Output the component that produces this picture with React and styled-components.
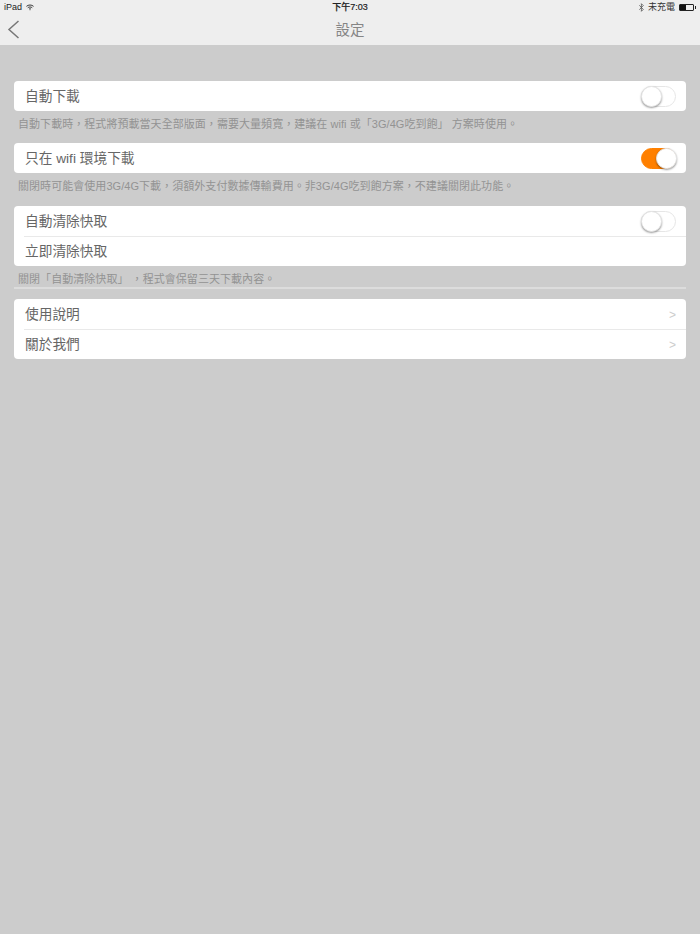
import styled, { createGlobalStyle } from "styled-components";

const GlobalStyle = createGlobalStyle`
  html, body {
    margin: 0;
    padding: 0;
    background: #cccccc;
    font-family: "Liberation Sans", "Noto Sans CJK TC", sans-serif;
  }
`;

const Page = styled.div`
  min-height: 934px;
  background: #cccccc;
`;

const Header = styled.header`
  height: 45px;
  background: #eeeeee;
  display: flex;
  flex-direction: column;
`;

const StatusBar = styled.div`
  height: 14px;
  padding: 0 4px;
  display: grid;
  grid-template-columns: 1fr auto 1fr;
  align-items: center;
  font-size: 9px;
  line-height: 14px;
  color: #222;
`;

const StatusLeft = styled.div`
  display: flex;
  align-items: center;
  gap: 4px;
`;

const StatusTime = styled.div`
  font-weight: 500;
  -webkit-text-stroke: 0.2px #222;
`;

const StatusRight = styled.div`
  display: flex;
  align-items: center;
  justify-content: flex-end;
  gap: 4px;
  color: #333;
`;

const NavBar = styled.div`
  flex: 1;
  position: relative;
  display: flex;
  align-items: center;
  justify-content: center;
`;

const BackButton = styled.div`
  position: absolute;
  left: 7px;
  top: 6px;
  display: flex;
`;

const Title = styled.h1`
  margin: 0 0 2px;
  font-size: 14.5px;
  font-weight: 400;
  color: #858585;
`;

const Content = styled.main`
  padding: 36px 14px 0;
`;

const Card = styled.section`
  background: #fff;
  border-radius: 4px;
  overflow: hidden;
`;

const Row = styled.div`
  height: 30px;
  box-sizing: border-box;
  margin-left: 10px;
  padding: 0 10px 0 1px;
  display: flex;
  align-items: center;
  justify-content: space-between;
  font-size: 13.7px;
  color: #666;
  & + & {
    box-shadow: inset 0 1px 0 ${p => (p.$soft ? "#e9e9e9" : "#dedede")};
  }
`;

const Label = styled.span`
  margin-top: -2px;
`;

const Note = styled.p`
  margin: 0;
  height: ${p => p.$height || 32}px;
  padding: 6px 0 0 4px;
  box-sizing: border-box;
  font-size: 11px;
  line-height: 15px;
  letter-spacing: 0.05px;
  color: #939393;
`;

const ShortNote = styled(Note)`
  height: 23px;
  margin-bottom: 10px;
  border-bottom: 2px solid #dcdcdc;
`;

const Track = styled.div`
  width: 35px;
  height: 21px;
  box-sizing: border-box;
  border-radius: 11px;
  position: relative;
  background: ${p => (p.$on ? "#ff8000" : "#fff")};
  border: 1px solid ${p => (p.$on ? "#ff8000" : "#e6e6e6")};
`;

const Knob = styled.div`
  position: absolute;
  top: -1px;
  left: ${p => (p.$on ? "14px" : "-1px")};
  width: 21px;
  height: 21px;
  box-sizing: border-box;
  border-radius: 50%;
  background: #fff;
  border: 1px solid #e4e4e4;
  box-shadow: 0 1px 2px rgba(0, 0, 0, 0.4);
`;

const Chevron = styled.span`
  font-size: 12px;
  color: #cccccc;
  margin-top: 1px;
`;

const Battery = styled.div`
  width: 15px;
  height: 7px;
  box-sizing: border-box;
  border: 1px solid #222;
  border-radius: 1px;
  margin-right: 2px;
  position: relative;
  &::before {
    content: "";
    position: absolute;
    left: 0;
    top: 0;
    bottom: 0;
    width: 6px;
    background: #111;
  }
  &::after {
    content: "";
    position: absolute;
    right: -3px;
    top: 1px;
    width: 1px;
    height: 3px;
    background: #222;
  }
`;

const Switch = ({ on }) => (
  <Track $on={on}>
    <Knob $on={on} />
  </Track>
);

const Wifi = () => (
  <svg width="8" height="7" viewBox="0 0 9 7" fill="none" stroke="#222" strokeWidth="1">
    <path d="M0.5 2.2C2.7 0.2 6.3 0.2 8.5 2.2" />
    <path d="M2 3.8C3.4 2.6 5.6 2.6 7 3.8" />
    <path d="M3.5 5.2C4.1 4.7 4.9 4.7 5.5 5.2" />
    <circle cx="4.5" cy="6.2" r="0.5" fill="#222" stroke="none" />
  </svg>
);

const Bluetooth = () => (
  <svg width="5" height="9" viewBox="0 0 5 9" fill="none" stroke="#555" strokeWidth="0.8">
    <path d="M0.3 2.3L4.3 6.4L2.4 8.3V0.7L4.3 2.6L0.3 6.7" />
  </svg>
);

const App = () => {
  return (
    <Page>
      <GlobalStyle />
      <Header>
        <StatusBar>
          <StatusLeft>
            iPad <Wifi />
          </StatusLeft>
          <StatusTime>下午7:03</StatusTime>
          <StatusRight>
            <Bluetooth />
            <span>未充電</span>
            <Battery />
          </StatusRight>
        </StatusBar>
        <NavBar>
          <BackButton>
            <svg width="13" height="19" viewBox="0 0 13 19" fill="none" stroke="#777" strokeWidth="1.5">
              <path d="M11.5 1L2 9.5L11.5 18" />
            </svg>
          </BackButton>
          <Title>設定</Title>
        </NavBar>
      </Header>
      <Content>
        <Card>
          <Row>
            <Label>自動下載</Label>
            <Switch />
          </Row>
        </Card>
        <Note>自動下載時，程式將預載當天全部版面，需要大量頻寬，建議在 wifi 或「3G/4G吃到飽」 方案時使用。</Note>
        <Card>
          <Row>
            <Label>只在 wifi 環境下載</Label>
            <Switch on />
          </Row>
        </Card>
        <Note $height={33}>關閉時可能會使用3G/4G下載，須額外支付數據傳輸費用。非3G/4G吃到飽方案，不建議關閉此功能。</Note>
        <Card>
          <Row>
            <Label>自動清除快取</Label>
            <Switch />
          </Row>
          <Row>
            <Label>立即清除快取</Label>
          </Row>
        </Card>
        <ShortNote>關閉「自動清除快取」 ，程式會保留三天下載內容。</ShortNote>
        <Card>
          <Row $soft>
            <Label>使用說明</Label>
            <Chevron>&gt;</Chevron>
          </Row>
          <Row $soft>
            <Label>關於我們</Label>
            <Chevron>&gt;</Chevron>
          </Row>
        </Card>
      </Content>
    </Page>
  );
};

export default App;
